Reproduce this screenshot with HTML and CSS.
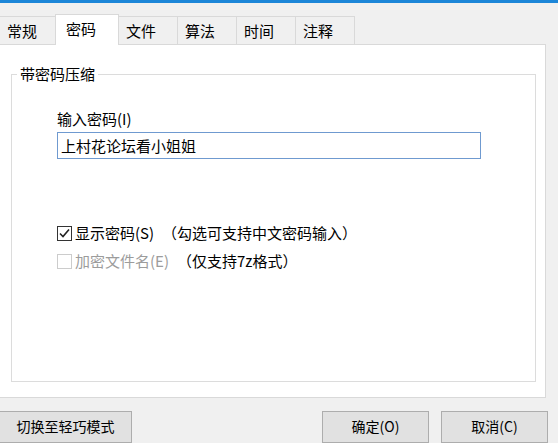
FILE: index.html
```html
<!DOCTYPE html>
<html lang="zh-CN">

<head>
    <meta charset="UTF-8">
    <title>带密码压缩</title>
    <link rel="stylesheet" href="styles.css">
</head>

<body>
    <div class="titlebar"></div>

    <div class="tabs">
        <div class="tab">常规</div>
        <div class="tab active">密码</div>
        <div class="tab">文件</div>
        <div class="tab">算法</div>
        <div class="tab">时间</div>
        <div class="tab">注释</div>
    </div>

    <div class="panel">
        <fieldset class="group">
            <legend>带密码压缩</legend>
            <div class="group-body">
                <label class="field-label" for="pwd">输入密码(I)</label>
                <input id="pwd" class="pwd-input" type="text" value="上村花论坛看小姐姐">

                <div class="options">
                    <div class="check-row">
                        <span class="box checked">
                            <svg width="13" height="13" viewBox="0 0 13 13">
                                <path d="M2 6.5 L5 9.5 L11 2.5" fill="none" stroke="#222" stroke-width="1.6" />
                            </svg>
                        </span>
                        <span>显示密码(S)</span>
                        <span class="note">（勾选可支持中文密码输入）</span>
                    </div>
                    <div class="check-row">
                        <span class="box disabled"></span>
                        <span class="muted">加密文件名(E)</span>
                        <span class="note">（仅支持7z格式）</span>
                    </div>
                </div>
            </div>
        </fieldset>
    </div>

    <div class="actions">
        <button class="btn">切换至轻巧模式</button>
        <button class="btn small push">确定(O)</button>
        <button class="btn small">取消(C)</button>
    </div>
</body>

</html>
```

FILE: styles.css
```css
* {
    margin: 0;
    padding: 0;
    box-sizing: border-box;
}

body {
    font-family: "Noto Sans CJK SC", "Noto Sans", sans-serif;
    font-size: 15px;
    color: #000;
    background: #f0f0f0;
    width: 558px;
    height: 443px;
    overflow: hidden;
}

.titlebar {
    height: 3px;
    background: #1c86d8;
}

/* Tab strip */
.tabs {
    display: flex;
    align-items: flex-end;
    height: 31px;
    margin-top: 11px;
}

.tab {
    width: 60px;
    height: 28px;
    margin-left: -1px;
    margin-bottom: 1px;
    padding-left: 7px;
    border: 1px solid #d9d9d9;
    border-bottom: none;
    background: #f0f0f0;
    display: flex;
    align-items: center;
    line-height: 1;
}

.tab:first-child {
    width: 57px;
}

.tab.active {
    width: 64px;
    height: 31px;
    margin-bottom: 0;
    padding-left: 10px;
    padding-bottom: 3px;
    background: #fff;
    position: relative;
    z-index: 1;
}

/* Page */
.panel {
    margin-top: -1px;
    margin-left: -1px;
    width: 547px;
    height: 354px;
    background: #fff;
    border: 1px solid #d9d9d9;
    padding-top: 19px;
}

.group {
    margin-left: 11px;
    width: 525px;
    height: 318px;
    border: 1px solid #dcdcdc;
    padding: 0;
}

.group legend {
    margin-left: 5px;
    padding: 0 3px;
    line-height: 20px;
}

.group-body {
    padding-left: 45px;
}

.field-label {
    display: block;
    margin-top: 25px;
    line-height: 20px;
}

.pwd-input {
    display: block;
    margin-top: 3px;
    width: 424px;
    height: 27px;
    border: 1px solid #6f9ad0;
    padding: 0 3px;
    font: inherit;
    font-size: 15px;
    color: #000;
    outline: none;
}

.options {
    margin-top: 64px;
    display: flex;
    flex-direction: column;
    gap: 8px;
}

.check-row {
    display: flex;
    align-items: center;
    height: 20px;
    line-height: 20px;
}

.box {
    flex: none;
    width: 15px;
    height: 15px;
    border: 1px solid #333;
    background: #fff;
    margin-right: 3px;
    display: flex;
    align-items: center;
    justify-content: center;
}

.box.disabled {
    border-color: #cccccc;
}

.muted {
    color: #9c9c9c;
}

.note {
    margin-left: 8px;
}

/* Bottom buttons */
.actions {
    display: flex;
    gap: 12px;
    margin-top: 13px;
    margin-left: -1px;
    padding-right: 10px;
}

.btn {
    height: 32px;
    width: 133px;
    background: #e1e1e1;
    border: 1px solid #adadad;
    font-family: "Noto Sans CJK SC", "Noto Sans", sans-serif;
    font-size: 14px;
    color: #000;
    padding-bottom: 2px;
}

.btn.small {
    width: 107px;
}

.btn.push {
    margin-left: auto;
}
```
